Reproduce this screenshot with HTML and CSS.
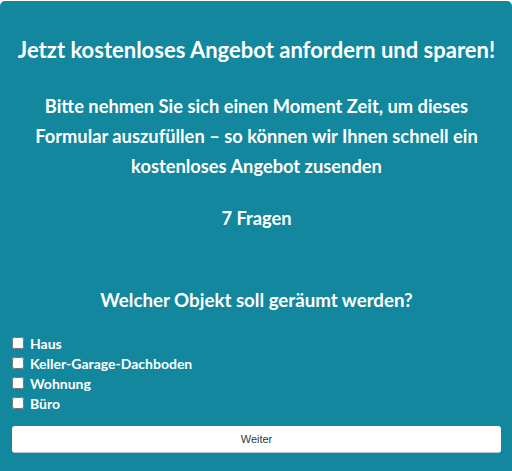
FILE: index.html
```html
<!DOCTYPE html>
<html lang="de">
<head>
<meta charset="utf-8">
<link rel="stylesheet" href="styles.css">
</head>
<body>
<div class="panel">
  <h1 class="title">Jetzt kostenloses Angebot anfordern und sparen!</h1>
  <p class="intro">Bitte nehmen Sie sich einen Moment Zeit, um dieses Formular auszufüllen – so können wir Ihnen schnell ein kostenloses Angebot zusenden</p>
  <p class="count">7 Fragen</p>
  <h2 class="question">Welcher Objekt soll geräumt werden?</h2>
  <ul class="options">
    <li><label class="option"><input type="checkbox"><span>Haus</span></label></li>
    <li><label class="option"><input type="checkbox"><span>Keller-Garage-Dachboden</span></label></li>
    <li><label class="option"><input type="checkbox"><span>Wohnung</span></label></li>
    <li><label class="option"><input type="checkbox"><span>Büro</span></label></li>
  </ul>
  <button class="next" type="button">Weiter</button>
</div>
</body>
</html>
```

FILE: styles.css
```css
html, body {
  margin: 0;
  padding: 0;
  background: #ffffff;
}
body {
  padding-top: 1px;
  font-family: "Lato", "Open Sans", sans-serif;
}
.panel {
  background: #13879d;
  border-radius: 5px 5px 0 0;
  color: #ffffff;
  min-height: 470px;
  padding: 23px 11px 0 12px;
  box-sizing: border-box;
}
.title {
  margin: 0;
  text-align: center;
  font-size: 22px;
  font-weight: 700;
  line-height: 52px;
}
.intro {
  margin: 15px auto 0;
  text-align: center;
  font-size: 18.3px;
  font-weight: 700;
  line-height: 30px;
  max-width: 460px;
}
.count {
  margin: 22px 0 0;
  text-align: center;
  font-size: 18.3px;
  font-weight: 700;
  line-height: 30px;
}
.question {
  margin: 52px 0 0;
  text-align: center;
  font-size: 18.7px;
  font-weight: 700;
  line-height: 30px;
}
.options {
  list-style: none;
  margin: 18px 0 0;
  padding: 0;
}
.option {
  display: flex;
  align-items: center;
  gap: 6px;
  height: 20px;
  font-size: 14px;
  font-weight: 700;
}
.option input {
  margin: 0;
  width: 12px;
  height: 12px;
}
.next {
  display: block;
  width: 100%;
  margin-top: 13px;
  height: 27px;
  background: #ffffff;
  border: none;
  border-bottom: 1px solid #b9c6c9;
  border-radius: 3px;
  color: #2d3a3c;
  font-family: "Liberation Sans", Arial, sans-serif;
  font-size: 11px;
}
```
